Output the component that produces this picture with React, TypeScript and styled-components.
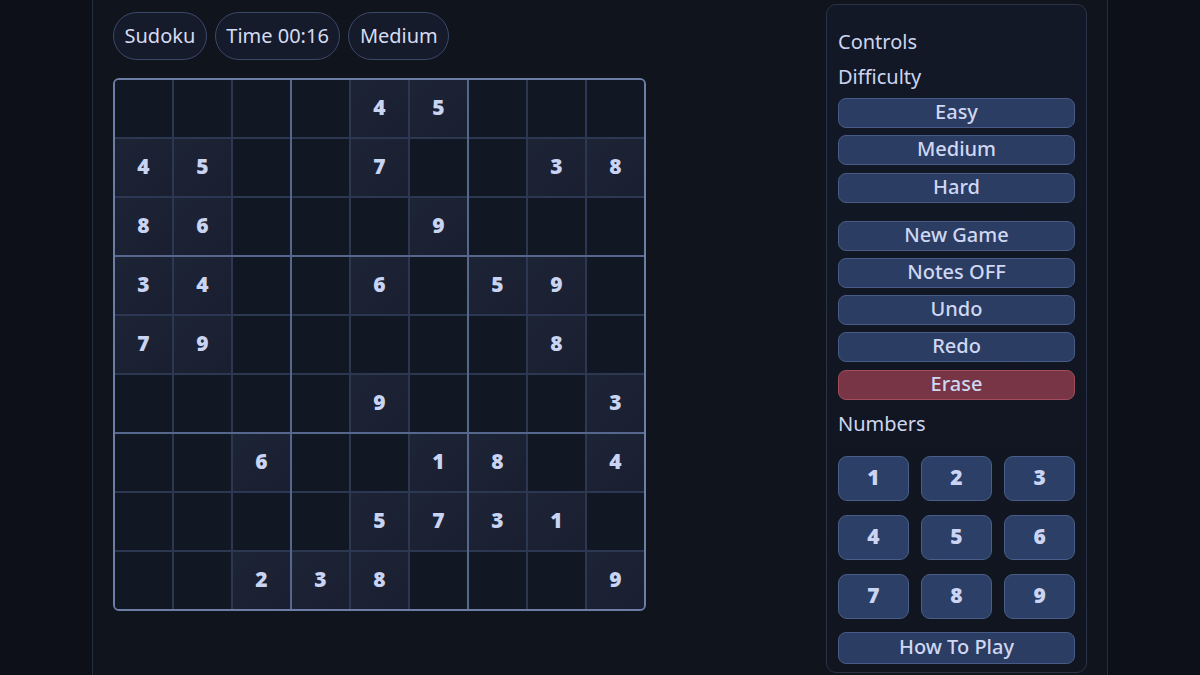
import React from 'react';
import styled, { createGlobalStyle } from 'styled-components';

const GlobalStyle = createGlobalStyle`
  html, body {
    margin: 0;
    padding: 0;
    background: #0d1018;
    height: 100%;
  }
  body {
    font-family: "Noto Sans", "Open Sans", sans-serif;
    color: #cdd5f0;
    overflow: hidden;
  }
`;

// 0 = empty cell
const PUZZLE: number[][] = [
  [0, 0, 0, 0, 4, 5, 0, 0, 0],
  [4, 5, 0, 0, 7, 0, 0, 3, 8],
  [8, 6, 0, 0, 0, 9, 0, 0, 0],
  [3, 4, 0, 0, 6, 0, 5, 9, 0],
  [7, 9, 0, 0, 0, 0, 0, 8, 0],
  [0, 0, 0, 0, 9, 0, 0, 0, 3],
  [0, 0, 6, 0, 0, 1, 8, 0, 4],
  [0, 0, 0, 0, 5, 7, 3, 1, 0],
  [0, 0, 2, 3, 8, 0, 0, 0, 9],
];

const App = () => {
  const boxes = [0, 1, 2, 3, 4, 5, 6, 7, 8].map((b) => {
    const br = Math.floor(b / 3) * 3;
    const bc = (b % 3) * 3;
    const cells: number[] = [];
    for (let r = 0; r < 3; r++) {
      for (let c = 0; c < 3; c++) cells.push(PUZZLE[br + r][bc + c]);
    }
    return cells;
  });

  return (
    <>
      <GlobalStyle />
      <Page>
        <Main>
          <Board>
            <Header>
              <Pill>Sudoku</Pill>
              <Pill>Time 00:16</Pill>
              <Pill>Medium</Pill>
            </Header>
            <Grid>
              {boxes.map((cells, i) => (
                <Box key={i}>
                  {cells.map((v, j) => (
                    <Cell key={j} $given={v !== 0}>
                      {v !== 0 ? v : ''}
                    </Cell>
                  ))}
                </Box>
              ))}
            </Grid>
          </Board>

          <Panel>
            <Title>Controls</Title>
            <Label>Difficulty</Label>
            <ButtonStack>
              <ActionButton>Easy</ActionButton>
              <ActionButton>Medium</ActionButton>
              <ActionButton>Hard</ActionButton>
            </ButtonStack>
            <ButtonStack $spaced>
              <ActionButton>New Game</ActionButton>
              <ActionButton>Notes OFF</ActionButton>
              <ActionButton>Undo</ActionButton>
              <ActionButton>Redo</ActionButton>
              <ActionButton $danger>Erase</ActionButton>
            </ButtonStack>
            <Label $top={10}>Numbers</Label>
            <NumberPad>
              {[1, 2, 3, 4, 5, 6, 7, 8, 9].map((n) => (
                <NumberButton key={n}>{n}</NumberButton>
              ))}
            </NumberPad>
            <HelpButton>How To Play</HelpButton>
          </Panel>
        </Main>
      </Page>
    </>
  );
};

const Page = styled.div`
  height: 675px;
  display: flex;
  justify-content: center;
`;

const Main = styled.div`
  width: 1016px;
  box-sizing: border-box;
  height: 100%;
  padding: 4px 20px 0 20px;
  border-left: 1px solid #262d3e;
  border-right: 1px solid #262d3e;
  background: #10141d;
  display: flex;
  justify-content: space-between;
  align-items: flex-start;
`;

const Board = styled.div`
  padding-top: 8px;
  display: flex;
  flex-direction: column;
  gap: 18px;
`;

const Header = styled.div`
  display: flex;
  gap: 8px;
`;

const Pill = styled.div`
  height: 48px;
  box-sizing: border-box;
  padding: 0 10.5px 2px;
  display: flex;
  align-items: center;
  border: 1px solid #3c486a;
  border-radius: 24px;
  background: #151b2a;
  color: #d6dcf2;
  font-size: 20px;
`;

const Grid = styled.div`
  display: grid;
  grid-template-columns: repeat(3, 175px);
  grid-template-rows: repeat(3, 175px);
  gap: 2px;
  background: #56678e;
  border: 2px solid #6c7ea6;
  border-radius: 6px;
  overflow: hidden;
  width: max-content;
`;

const Box = styled.div`
  display: grid;
  grid-template-columns: repeat(3, 57px);
  grid-template-rows: repeat(3, 57px);
  gap: 2px;
  background: #2c3852;
`;

const Cell = styled.div<{ $given: boolean }>`
  display: flex;
  align-items: center;
  justify-content: center;
  padding-bottom: 3px;
  box-sizing: border-box;
  background: ${({ $given }) =>
    $given ? 'linear-gradient(135deg, #1d2436, #191f30)' : '#121724'};
  color: #c9d3f2;
  font-size: 21px;
  font-weight: 900;
`;

const Panel = styled.div`
  width: 261px;
  height: 669px;
  box-sizing: border-box;
  padding: 23px 11px 8px 11px;
  border: 1px solid #2a3248;
  border-radius: 10px;
  background: linear-gradient(180deg, #121826, #10151f);
  display: flex;
  flex-direction: column;
`;

const Title = styled.div`
  font-size: 20px;
  line-height: 28px;
  color: #cdd5f0;
`;

const Label = styled.div<{ $top?: number }>`
  font-size: 20px;
  line-height: 28px;
  margin-top: ${({ $top }) => $top ?? 7}px;
  color: #cdd5f0;
`;

const ButtonStack = styled.div<{ $spaced?: boolean }>`
  display: flex;
  flex-direction: column;
  gap: 7.3px;
  margin-top: ${({ $spaced }) => ($spaced ? 18 : 7)}px;
`;

const ActionButton = styled.button<{ $danger?: boolean }>`
  all: unset;
  box-sizing: border-box;
  height: 30px;
  padding-bottom: 3px;
  display: flex;
  align-items: center;
  justify-content: center;
  border-radius: 8px;
  border: 1px solid ${({ $danger }) => ($danger ? '#a24c5c' : '#475b86')};
  background: ${({ $danger }) => ($danger ? '#773545' : '#2b3d63')};
  color: #cfd7f2;
  font-family: "Noto Sans", "Open Sans", sans-serif;
  font-size: 20px;
  font-weight: 500;
  cursor: pointer;
`;

const NumberPad = styled.div`
  margin-top: 18px;
  display: grid;
  grid-template-columns: repeat(3, 1fr);
  column-gap: 12.5px;
  row-gap: 14px;
`;

const NumberButton = styled.button`
  all: unset;
  box-sizing: border-box;
  height: 45px;
  padding-bottom: 2px;
  display: flex;
  align-items: center;
  justify-content: center;
  border-radius: 9px;
  border: 1px solid #4a5d88;
  background: #2c3f66;
  color: #cbd5f3;
  font-family: "Noto Sans", "Open Sans", sans-serif;
  font-size: 21px;
  font-weight: 900;
  cursor: pointer;
`;

const HelpButton = styled(ActionButton)`
  margin-top: 13px;
  height: 32px;
`;

export default App;
